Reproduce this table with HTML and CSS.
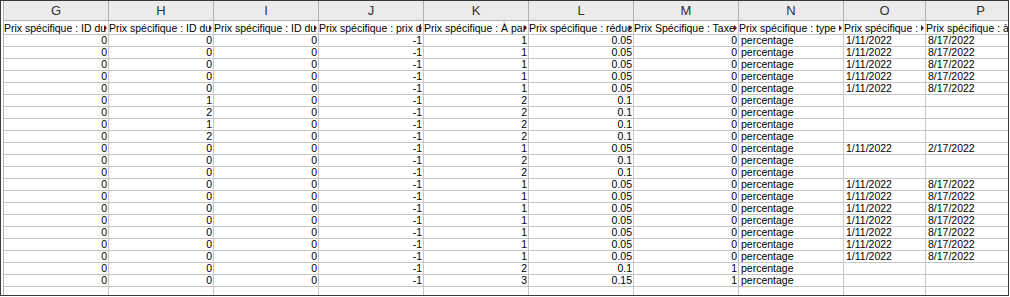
FILE: index.html
```html
<!DOCTYPE html>
<html>
<head>
<meta charset="utf-8">
<link rel="stylesheet" href="styles.css">
</head>
<body>
<div class="frame">
  <div class="sheet">
    <div class="row colhead">
      <div class="ch">G</div><div class="ch">H</div><div class="ch">I</div><div class="ch">J</div><div class="ch">K</div><div class="ch">L</div><div class="ch">M</div><div class="ch">N</div><div class="ch">O</div><div class="ch">P</div>
    </div>
    <div class="row titles">
      <div class="c h">Prix spécifique : ID du<span class="arr"></span></div>
      <div class="c h">Prix spécifique : ID du<span class="arr"></span></div>
      <div class="c h">Prix spécifique : ID du<span class="arr"></span></div>
      <div class="c h">Prix spécifique : prix d<span class="arr"></span></div>
      <div class="c h">Prix spécifique : À par<span class="arr"></span></div>
      <div class="c h">Prix spécifique : réduc<span class="arr"></span></div>
      <div class="c h">Prix Spécifique : Taxe<span class="arr"></span></div>
      <div class="c h">Prix spécifique : type<span class="arr"></span></div>
      <div class="c h">Prix spécifique :<span class="arr"></span></div>
      <div class="c h last">Prix spécifique : à</div>
    </div>
    <div class="row"><div class="c n">0</div><div class="c n">0</div><div class="c n">0</div><div class="c n">-1</div><div class="c n">1</div><div class="c n">0.05</div><div class="c n">0</div><div class="c t">percentage</div><div class="c t">1/11/2022</div><div class="c t">8/17/2022</div></div>
    <div class="row"><div class="c n">0</div><div class="c n">0</div><div class="c n">0</div><div class="c n">-1</div><div class="c n">1</div><div class="c n">0.05</div><div class="c n">0</div><div class="c t">percentage</div><div class="c t">1/11/2022</div><div class="c t">8/17/2022</div></div>
    <div class="row"><div class="c n">0</div><div class="c n">0</div><div class="c n">0</div><div class="c n">-1</div><div class="c n">1</div><div class="c n">0.05</div><div class="c n">0</div><div class="c t">percentage</div><div class="c t">1/11/2022</div><div class="c t">8/17/2022</div></div>
    <div class="row"><div class="c n">0</div><div class="c n">0</div><div class="c n">0</div><div class="c n">-1</div><div class="c n">1</div><div class="c n">0.05</div><div class="c n">0</div><div class="c t">percentage</div><div class="c t">1/11/2022</div><div class="c t">8/17/2022</div></div>
    <div class="row"><div class="c n">0</div><div class="c n">0</div><div class="c n">0</div><div class="c n">-1</div><div class="c n">1</div><div class="c n">0.05</div><div class="c n">0</div><div class="c t">percentage</div><div class="c t">1/11/2022</div><div class="c t">8/17/2022</div></div>
    <div class="row"><div class="c n">0</div><div class="c n">1</div><div class="c n">0</div><div class="c n">-1</div><div class="c n">2</div><div class="c n">0.1</div><div class="c n">0</div><div class="c t">percentage</div><div class="c t"></div><div class="c t"></div></div>
    <div class="row"><div class="c n">0</div><div class="c n">2</div><div class="c n">0</div><div class="c n">-1</div><div class="c n">2</div><div class="c n">0.1</div><div class="c n">0</div><div class="c t">percentage</div><div class="c t"></div><div class="c t"></div></div>
    <div class="row"><div class="c n">0</div><div class="c n">1</div><div class="c n">0</div><div class="c n">-1</div><div class="c n">2</div><div class="c n">0.1</div><div class="c n">0</div><div class="c t">percentage</div><div class="c t"></div><div class="c t"></div></div>
    <div class="row"><div class="c n">0</div><div class="c n">2</div><div class="c n">0</div><div class="c n">-1</div><div class="c n">2</div><div class="c n">0.1</div><div class="c n">0</div><div class="c t">percentage</div><div class="c t"></div><div class="c t"></div></div>
    <div class="row"><div class="c n">0</div><div class="c n">0</div><div class="c n">0</div><div class="c n">-1</div><div class="c n">1</div><div class="c n">0.05</div><div class="c n">0</div><div class="c t">percentage</div><div class="c t">1/11/2022</div><div class="c t">2/17/2022</div></div>
    <div class="row"><div class="c n">0</div><div class="c n">0</div><div class="c n">0</div><div class="c n">-1</div><div class="c n">2</div><div class="c n">0.1</div><div class="c n">0</div><div class="c t">percentage</div><div class="c t"></div><div class="c t"></div></div>
    <div class="row"><div class="c n">0</div><div class="c n">0</div><div class="c n">0</div><div class="c n">-1</div><div class="c n">2</div><div class="c n">0.1</div><div class="c n">0</div><div class="c t">percentage</div><div class="c t"></div><div class="c t"></div></div>
    <div class="row"><div class="c n">0</div><div class="c n">0</div><div class="c n">0</div><div class="c n">-1</div><div class="c n">1</div><div class="c n">0.05</div><div class="c n">0</div><div class="c t">percentage</div><div class="c t">1/11/2022</div><div class="c t">8/17/2022</div></div>
    <div class="row"><div class="c n">0</div><div class="c n">0</div><div class="c n">0</div><div class="c n">-1</div><div class="c n">1</div><div class="c n">0.05</div><div class="c n">0</div><div class="c t">percentage</div><div class="c t">1/11/2022</div><div class="c t">8/17/2022</div></div>
    <div class="row"><div class="c n">0</div><div class="c n">0</div><div class="c n">0</div><div class="c n">-1</div><div class="c n">1</div><div class="c n">0.05</div><div class="c n">0</div><div class="c t">percentage</div><div class="c t">1/11/2022</div><div class="c t">8/17/2022</div></div>
    <div class="row"><div class="c n">0</div><div class="c n">0</div><div class="c n">0</div><div class="c n">-1</div><div class="c n">1</div><div class="c n">0.05</div><div class="c n">0</div><div class="c t">percentage</div><div class="c t">1/11/2022</div><div class="c t">8/17/2022</div></div>
    <div class="row"><div class="c n">0</div><div class="c n">0</div><div class="c n">0</div><div class="c n">-1</div><div class="c n">1</div><div class="c n">0.05</div><div class="c n">0</div><div class="c t">percentage</div><div class="c t">1/11/2022</div><div class="c t">8/17/2022</div></div>
    <div class="row"><div class="c n">0</div><div class="c n">0</div><div class="c n">0</div><div class="c n">-1</div><div class="c n">1</div><div class="c n">0.05</div><div class="c n">0</div><div class="c t">percentage</div><div class="c t">1/11/2022</div><div class="c t">8/17/2022</div></div>
    <div class="row"><div class="c n">0</div><div class="c n">0</div><div class="c n">0</div><div class="c n">-1</div><div class="c n">1</div><div class="c n">0.05</div><div class="c n">0</div><div class="c t">percentage</div><div class="c t">1/11/2022</div><div class="c t">8/17/2022</div></div>
    <div class="row"><div class="c n">0</div><div class="c n">0</div><div class="c n">0</div><div class="c n">-1</div><div class="c n">2</div><div class="c n">0.1</div><div class="c n">1</div><div class="c t">percentage</div><div class="c t"></div><div class="c t"></div></div>
    <div class="row"><div class="c n">0</div><div class="c n">0</div><div class="c n">0</div><div class="c n">-1</div><div class="c n">3</div><div class="c n">0.15</div><div class="c n">1</div><div class="c t">percentage</div><div class="c t"></div><div class="c t"></div></div>
    <div class="row"><div class="c"></div><div class="c"></div><div class="c"></div><div class="c"></div><div class="c"></div><div class="c"></div><div class="c"></div><div class="c"></div><div class="c"></div><div class="c"></div></div>
  </div>
</div>
</body>
</html>
```
FILE: styles.css
```css
html, body {
  margin: 0;
  padding: 0;
  background: #ffffff;
}
.frame {
  width: 1009px;
  height: 296px;
  box-sizing: border-box;
  border: 1px solid #3a3a3a;
  padding-left: 2px;
  overflow: hidden;
  background: #ffffff;
}
.sheet {
  border-left: 1px solid #b4b4b4;
  font-family: "Liberation Sans", Arial, sans-serif;
  font-size: 10.5px;
  color: #000000;
}
.row {
  display: grid;
  grid-template-columns: repeat(8, 105px) 82px 110px;
  height: 12px;
}
.c {
  box-sizing: border-box;
  height: 12px;
  border-right: 1px solid #c6c6c6;
  border-bottom: 1px solid #c6c6c6;
  line-height: 11px;
  white-space: nowrap;
  overflow: hidden;
  position: relative;
}
.titles {
  height: 14px;
}
.titles .c {
  height: 14px;
  line-height: 12px;
  padding-top: 1px;
}
.n {
  text-align: right;
  padding-right: 1px;
}
.t {
  text-align: left;
  padding-left: 2px;
}
.h {
  padding-left: 0;
  padding-right: 4px;
}
.h.last {
  padding-right: 0;
}
.arr {
  position: absolute;
  right: 1px;
  top: 4px;
  width: 0;
  height: 0;
  border-top: 3px solid transparent;
  border-bottom: 3px solid transparent;
  border-left: 3px solid #5a1010;
}
.colhead {
  height: 20px;
  background: #ebebeb;
}
.ch {
  box-sizing: border-box;
  height: 20px;
  border-right: 1px solid #b0b0b0;
  border-bottom: 1px solid #b0b0b0;
  text-align: center;
  font-size: 13px;
  line-height: 19px;
  color: #333333;
  background: #ebebeb;
}
```
